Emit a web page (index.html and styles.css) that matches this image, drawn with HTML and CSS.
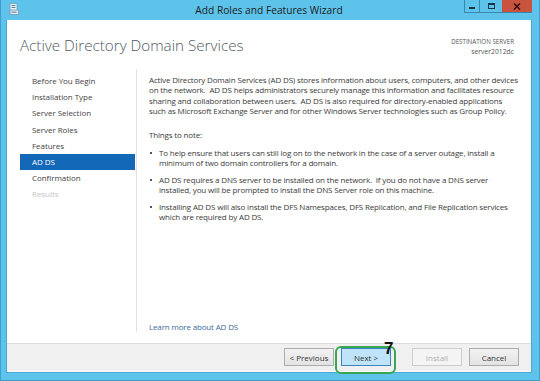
FILE: index.html
```html
<!DOCTYPE html>
<html lang="en">
<head>
<meta charset="utf-8">
<title>Add Roles and Features Wizard</title>
<link rel="stylesheet" href="styles.css">
</head>
<body>
<div class="window">
  <div class="titlebar">
    <svg class="app-icon" width="10" height="12" viewBox="0 0 10 12">
      <rect x="1" y="0.5" width="7" height="11" fill="#eef6fb" stroke="#7aa7c2" stroke-width="1"/>
      <rect x="2.5" y="2" width="4" height="1" fill="#5a7f96"/>
      <rect x="2.5" y="4" width="4" height="1" fill="#5a7f96"/>
      <rect x="1" y="7" width="8.5" height="4.5" fill="#dfe9ef" stroke="#7aa7c2" stroke-width="1"/>
      <rect x="2.5" y="8.6" width="5" height="1" fill="#5a7f96"/>
    </svg>
    <div class="title">Add Roles and Features Wizard</div>
    <div class="controls">
      <div class="ctl ctl-min"><span class="glyph-min"></span></div>
      <div class="ctl ctl-max"><span class="glyph-max"></span></div>
      <div class="ctl ctl-close">
        <svg width="8" height="7" viewBox="0 0 8 7"><path d="M1 0.5 L7 6.5 M7 0.5 L1 6.5" stroke="#3a1410" stroke-width="1.6"/></svg>
      </div>
    </div>
  </div>
  <div class="client">
    <div class="main">
      <header class="head">
        <h1 class="heading">Active Directory Domain Services</h1>
        <div class="dest">
          <div class="dest-label">DESTINATION SERVER</div>
          <div class="dest-name">server2012dc</div>
        </div>
      </header>
      <div class="body">
        <nav class="steps">
          <div class="step">Before You Begin</div>
          <div class="step">Installation Type</div>
          <div class="step">Server Selection</div>
          <div class="step">Server Roles</div>
          <div class="step">Features</div>
          <div class="step step-active">AD DS</div>
          <div class="step">Confirmation</div>
          <div class="step step-disabled">Results</div>
        </nav>
        <div class="sep"></div>
        <section class="content">
          <p class="intro">Active Directory Domain Services (AD DS) stores information about users, computers, and other devices<br>on the network.&nbsp; AD DS helps administrators securely manage this information and facilitates resource<br>sharing and collaboration between users.&nbsp; AD DS is also required for directory-enabled applications<br>such as Microsoft Exchange Server and for other Windows Server technologies such as Group Policy.</p>
          <p class="note">Things to note:</p>
          <ul class="bullets">
            <li>To help ensure that users can still log on to the network in the case of a server outage, install a<br>minimum of two domain controllers for a domain.</li>
            <li>AD DS requires a DNS server to be installed on the network.&nbsp; If you do not have a DNS server<br>installed, you will be prompted to install the DNS Server role on this machine.</li>
            <li>Installing AD DS will also install the DFS Namespaces, DFS Replication, and File Replication services<br>which are required by AD DS.</li>
          </ul>
          <a class="learn" href="#">Learn more about AD DS</a>
        </section>
      </div>
    </div>
    <footer class="footer">
      <button class="btn">&lt; Previous</button>
      <div class="next-wrap">
        <button class="btn btn-default">Next &gt;</button>
        <div class="annot-box"></div>
        <div class="annot-num">7</div>
      </div>
      <button class="btn btn-disabled">Install</button>
      <button class="btn">Cancel</button>
    </footer>
  </div>
</div>
</body>
</html>
```

FILE: styles.css
```css
* { box-sizing: border-box; }
html, body { margin: 0; padding: 0; }
body {
  width: 540px;
  height: 381px;
  overflow: hidden;
  font-family: "Open Sans", "Noto Sans", "Liberation Sans", sans-serif;
  color: #333;
}
.window {
  width: 540px;
  height: 381px;
  background: #5ec3ea;
  padding: 0 7px 7px 5px;
  display: flex;
  flex-direction: column;
  border-left: 1px solid #3f9fcc;
  border-right: 1px solid #3f9fcc;
  border-bottom: 1px solid #3f9fcc;
}
.titlebar {
  height: 20px;
  flex: none;
  display: flex;
  align-items: flex-start;
  position: relative;
}
.app-icon {
  margin: 3px 0 0 3px;
}
.title {
  position: absolute;
  left: 0;
  right: 0;
  top: 3px;
  text-align: center;
  font-size: 10.2px;
  line-height: 14px;
  color: #1c1c1c;
  pointer-events: none;
}
.controls {
  margin-left: auto;
  display: flex;
  height: 13px;
  border-left: 1px solid #3b87ab;
  border-bottom: 1px solid #3b87ab;
}
.ctl {
  display: flex;
  align-items: center;
  justify-content: center;
}
.ctl-min {
  width: 15px;
  border-right: 1px solid #3b87ab;
}
.ctl-max {
  width: 22px;
}
.ctl-close {
  width: 30px;
  background: #c9533f;
}
.glyph-min {
  width: 6px;
  height: 2px;
  background: #173646;
  margin-top: 4px;
}
.glyph-max {
  width: 7px;
  height: 6px;
  border: 1px solid #173646;
  border-top-width: 2px;
}
.client {
  flex: 1;
  display: flex;
  flex-direction: column;
  background: #fff;
  border: 1px solid #4aa8d2;
  border-top: none;
}
.main {
  flex: 1;
  display: flex;
  flex-direction: column;
  background: #fff;
}
.head {
  height: 49px;
  flex: none;
  display: flex;
  justify-content: space-between;
  align-items: flex-start;
  padding: 0 17px 0 13px;
}
.heading {
  margin: 15px 0 0 0;
  font-size: 15.2px;
  font-weight: 300;
  line-height: 20px;
  color: #505a62;
}
.dest {
  margin-top: 17px;
  text-align: right;
  font-size: 6.2px;
  line-height: 10px;
  color: #555;
}
.dest-name {
  font-size: 6.8px;
}
.body {
  flex: 1;
  display: flex;
  padding-bottom: 11px;
}
.steps {
  width: 129px;
  flex: none;
  padding: 4px 1px 0 13px;
  font-size: 8px;
  letter-spacing: -0.05px;
}
.step {
  height: 16.2px;
  line-height: 16.2px;
  padding-left: 12px;
  color: #444;
}
.step-active {
  background: #1468b8;
  color: #fff;
}
.step-disabled {
  color: #c6c6c6;
}
.sep {
  width: 1px;
  flex: none;
  background: #e2e2e2;
}
.content {
  flex: 1;
  display: flex;
  flex-direction: column;
  padding: 6px 10px 0 12px;
  font-size: 8px;
  line-height: 10.4px;
  color: #3a3a3a;
  letter-spacing: -0.16px;
  white-space: nowrap;
}
.intro {
  margin: 0;
}
.note {
  margin: 13px 0 0 0;
}
.bullets {
  margin: 8px 0 0 0;
  padding: 0;
  list-style: none;
}
.bullets li {
  position: relative;
  padding-left: 10px;
  margin-bottom: 6px;
}
.bullets li::before {
  content: "";
  position: absolute;
  left: 1px;
  top: 4px;
  width: 2px;
  height: 2px;
  background: #555;
}
.learn {
  margin-top: auto;
  color: #3b6a9a;
  text-decoration: none;
}
.footer {
  height: 29px;
  flex: none;
  display: flex;
  align-items: flex-start;
  padding: 4px 12px 0 0;
  justify-content: flex-end;
  background: #f0f0f0;
  border-top: 1px solid #dcdcdc;
  border-bottom: 1px solid #fafafa;
}
.btn {
  width: 50px;
  height: 18px;
  margin: 0 0 0 7px;
  padding: 0;
  font-family: inherit;
  font-size: 8px;
  color: #333;
  background: linear-gradient(#f2f2f2, #e3e3e3);
  border: 1px solid #acacac;
  border-radius: 0;
}
.btn-default {
  margin: 0;
  background: #bfe4fa;
  border-color: #3c84bb;
}
.btn-disabled {
  margin-left: 21px;
  color: #b0b0b0;
  background: #f4f4f4;
  border-color: #cdcdcd;
}
.next-wrap {
  position: relative;
  margin-left: 7px;
  display: flex;
}
.annot-box {
  position: absolute;
  left: -6px;
  top: -2px;
  width: 61px;
  height: 28px;
  border: 2px solid #3aa651;
  border-radius: 6px;
  pointer-events: none;
}
.annot-num {
  position: absolute;
  left: 43px;
  top: -7px;
  font-family: "Liberation Sans", sans-serif;
  font-weight: bold;
  font-size: 17px;
  line-height: 16px;
  color: #111;
}
```
